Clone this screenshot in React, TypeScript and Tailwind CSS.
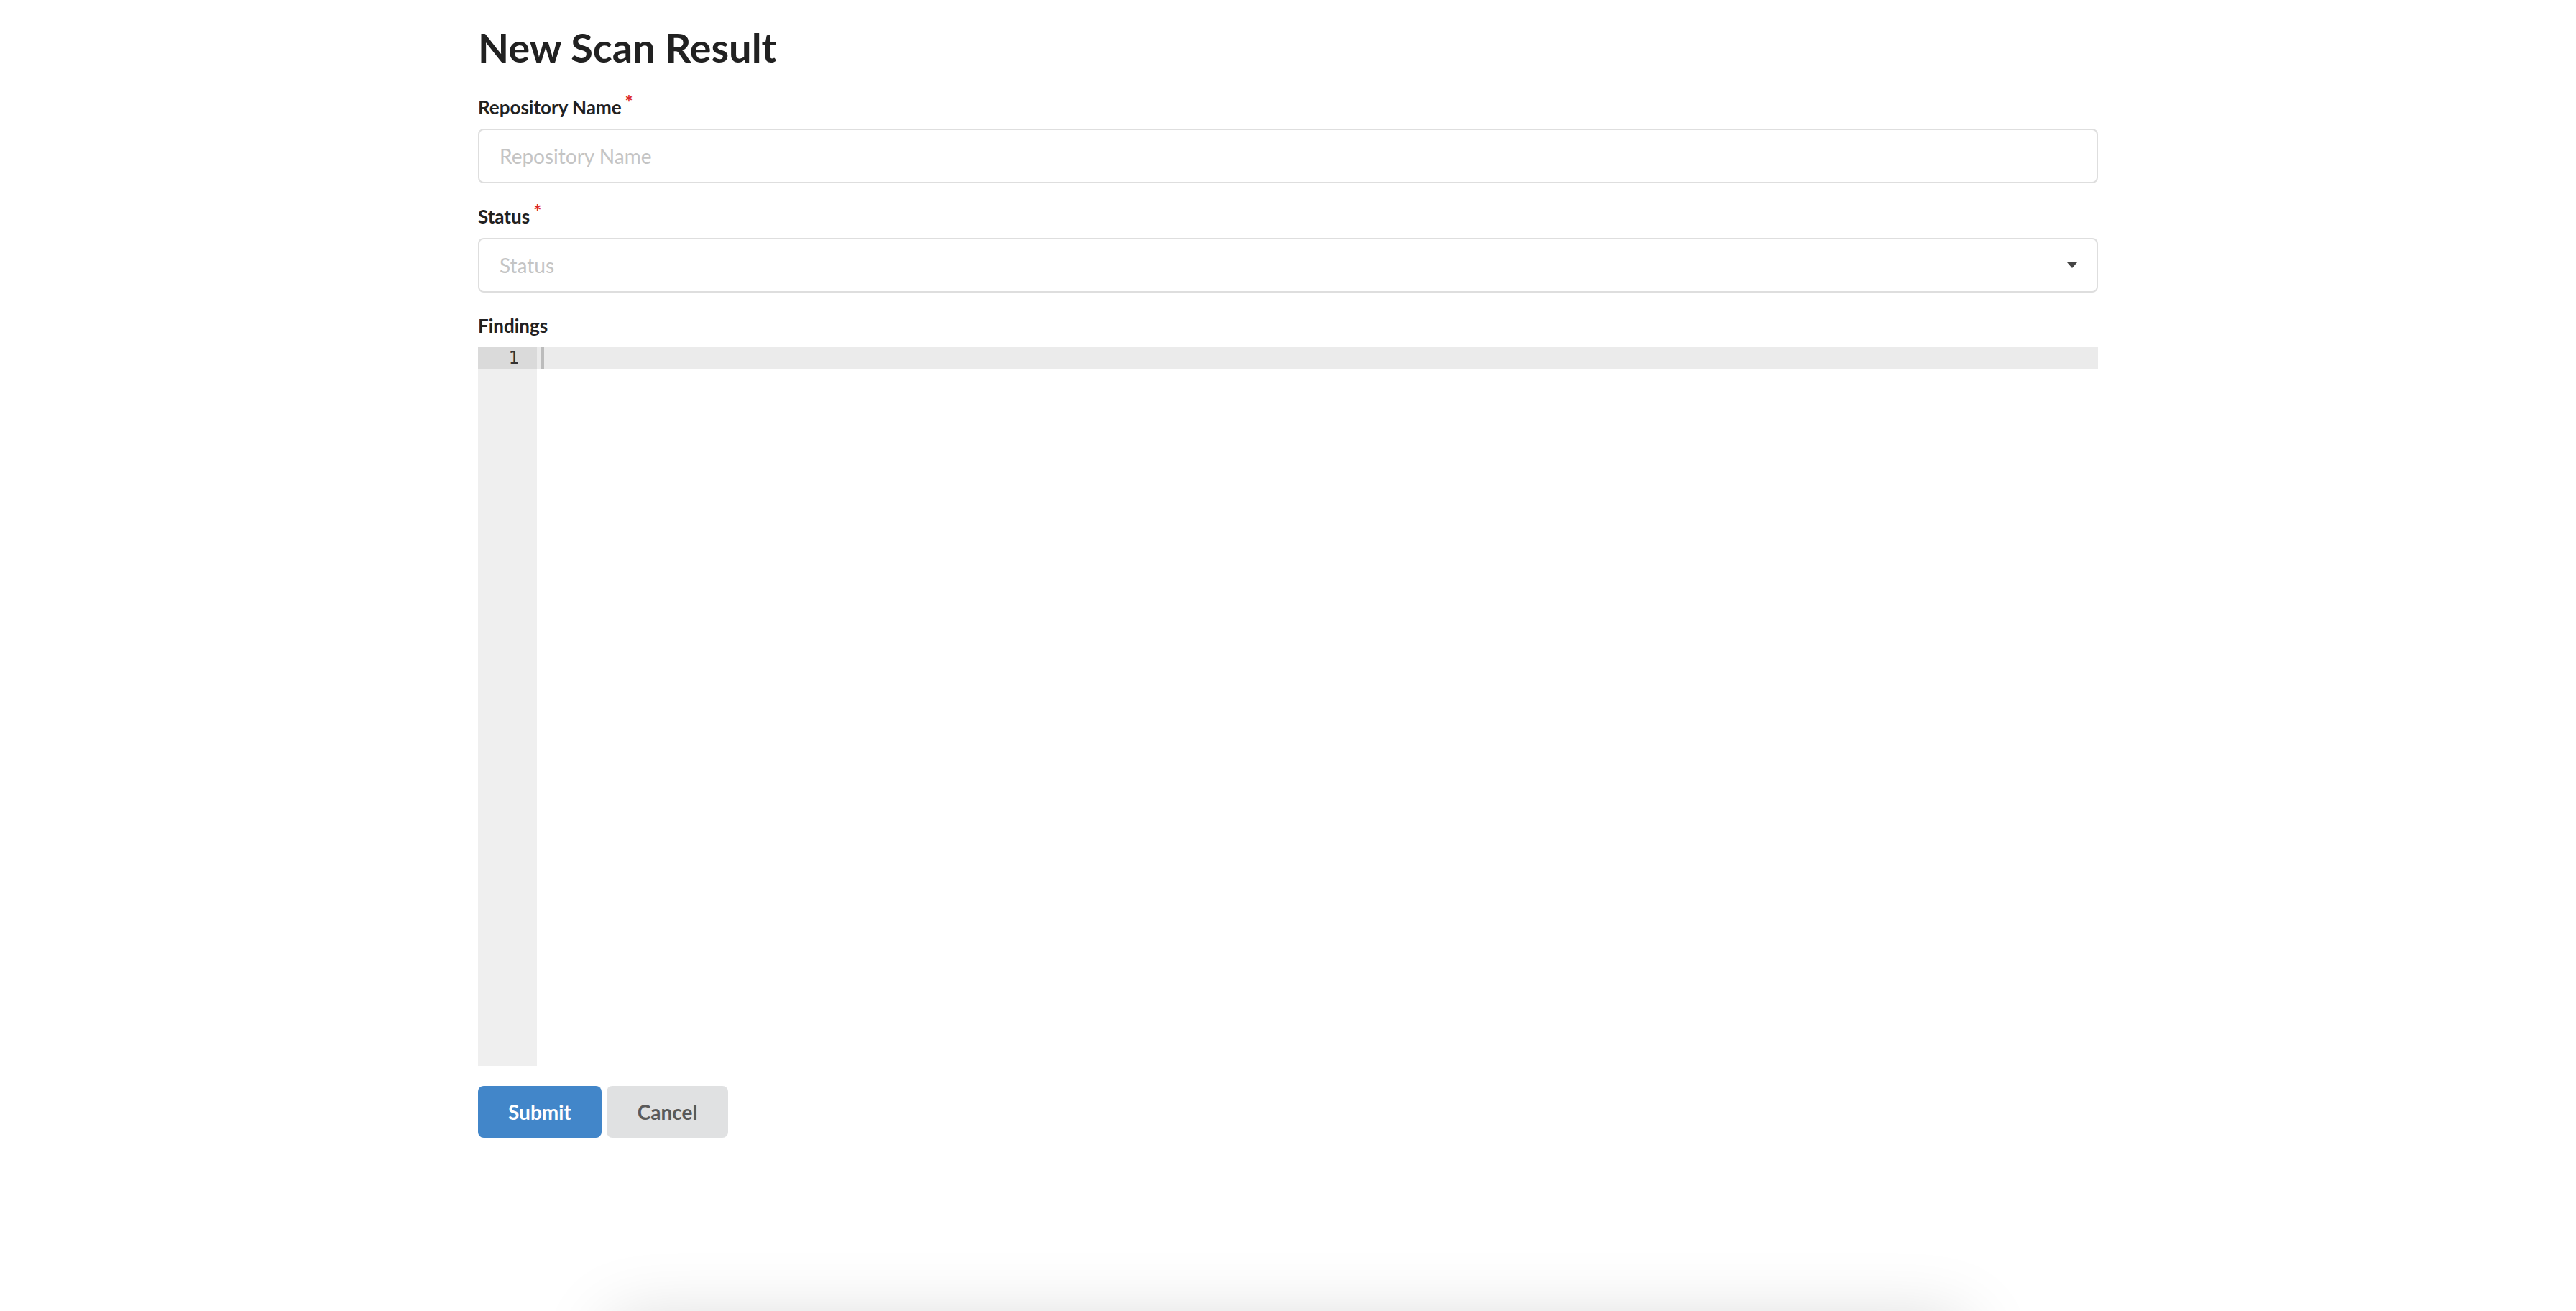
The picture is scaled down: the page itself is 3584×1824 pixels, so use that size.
import React from 'react';

interface FieldProps {
  label: string;
  required?: boolean;
  children: React.ReactNode;
}

function Field({ label, required, children }: FieldProps) {
  return (
    <div className="mb-[28px]">
      <label className="block h-[37px] mb-[11px] text-[26px] leading-[37px] font-bold text-[#212121]">
        {label}
        {required && (
          <span className="relative -top-[7px] ml-[5px] text-[#db2828]">*</span>
        )}
      </label>
      {children}
    </div>
  );
}

export default function App() {
  return (
    <div className="relative min-h-screen overflow-hidden bg-white font-[Lato,sans-serif] text-[#212121]">
      <div className="mx-auto w-[2254px] pt-[30px]">
        <h1 className="mb-[29px] text-[56px] leading-[72px] font-bold">New Scan Result</h1>

        <form onSubmit={(e) => e.preventDefault()}>
          {/* Repository name */}
          <Field label="Repository Name" required>
            <input
              type="text"
              placeholder="Repository Name"
              className="block h-[76px] w-full rounded-[8px] border-2 border-[#dedede] bg-white px-[28px] text-[28px] text-[#212121] outline-none placeholder:text-[#c4c4c4]"
            />
          </Field>

          {/* Status dropdown */}
          <Field label="Status" required>
            <div className="flex h-[76px] w-full items-center justify-between rounded-[8px] border-2 border-[#dedede] bg-white pl-[28px] pr-[27px]">
              <span className="text-[28px] text-[#c4c4c4]">Status</span>
              <svg width="14" height="8" viewBox="0 0 14 8">
                <polygon points="0,0 14,0 7,8" fill="#444444" />
              </svg>
            </div>
          </Field>

          {/* Findings editor */}
          <div className="mb-[28px]">
            <label className="block h-[37px] mb-[11px] text-[26px] leading-[37px] font-bold text-[#212121]">
              Findings
            </label>
            <div className="flex h-[1000px] w-full bg-white">
              <div className="w-[82px] bg-[#efefef]">
                <div className="h-[31px] bg-[#dadada] pr-[25px] text-right font-['DejaVu_Sans_Mono',monospace] text-[24px] leading-[31px] text-[#333333]">
                  1
                </div>
              </div>
              <div className="flex-1">
                <div className="flex h-[31px] items-stretch bg-[#ebebeb] pl-[6px]">
                  <span className="w-[4px] bg-[#bcbcbc]" />
                </div>
              </div>
            </div>
          </div>

          <div className="flex gap-[7px]">
            <button
              type="submit"
              className="h-[72px] rounded-[8px] bg-[#4286c9] px-[42px] text-[28px] leading-[28px] font-bold text-white"
            >
              Submit
            </button>
            <button
              type="button"
              className="h-[72px] rounded-[8px] bg-[#e0e1e2] px-[43px] text-[28px] leading-[28px] font-bold text-[#5a5a5a]"
            >
              Cancel
            </button>
          </div>
        </form>
      </div>

      {/* shadow of a panel sitting just below the fold */}
      <div className="fixed left-1/2 top-[1840px] h-[120px] w-[1880px] -translate-x-1/2 bg-white shadow-[0_0_100px_rgba(0,0,0,0.17)]" />
    </div>
  );
}
